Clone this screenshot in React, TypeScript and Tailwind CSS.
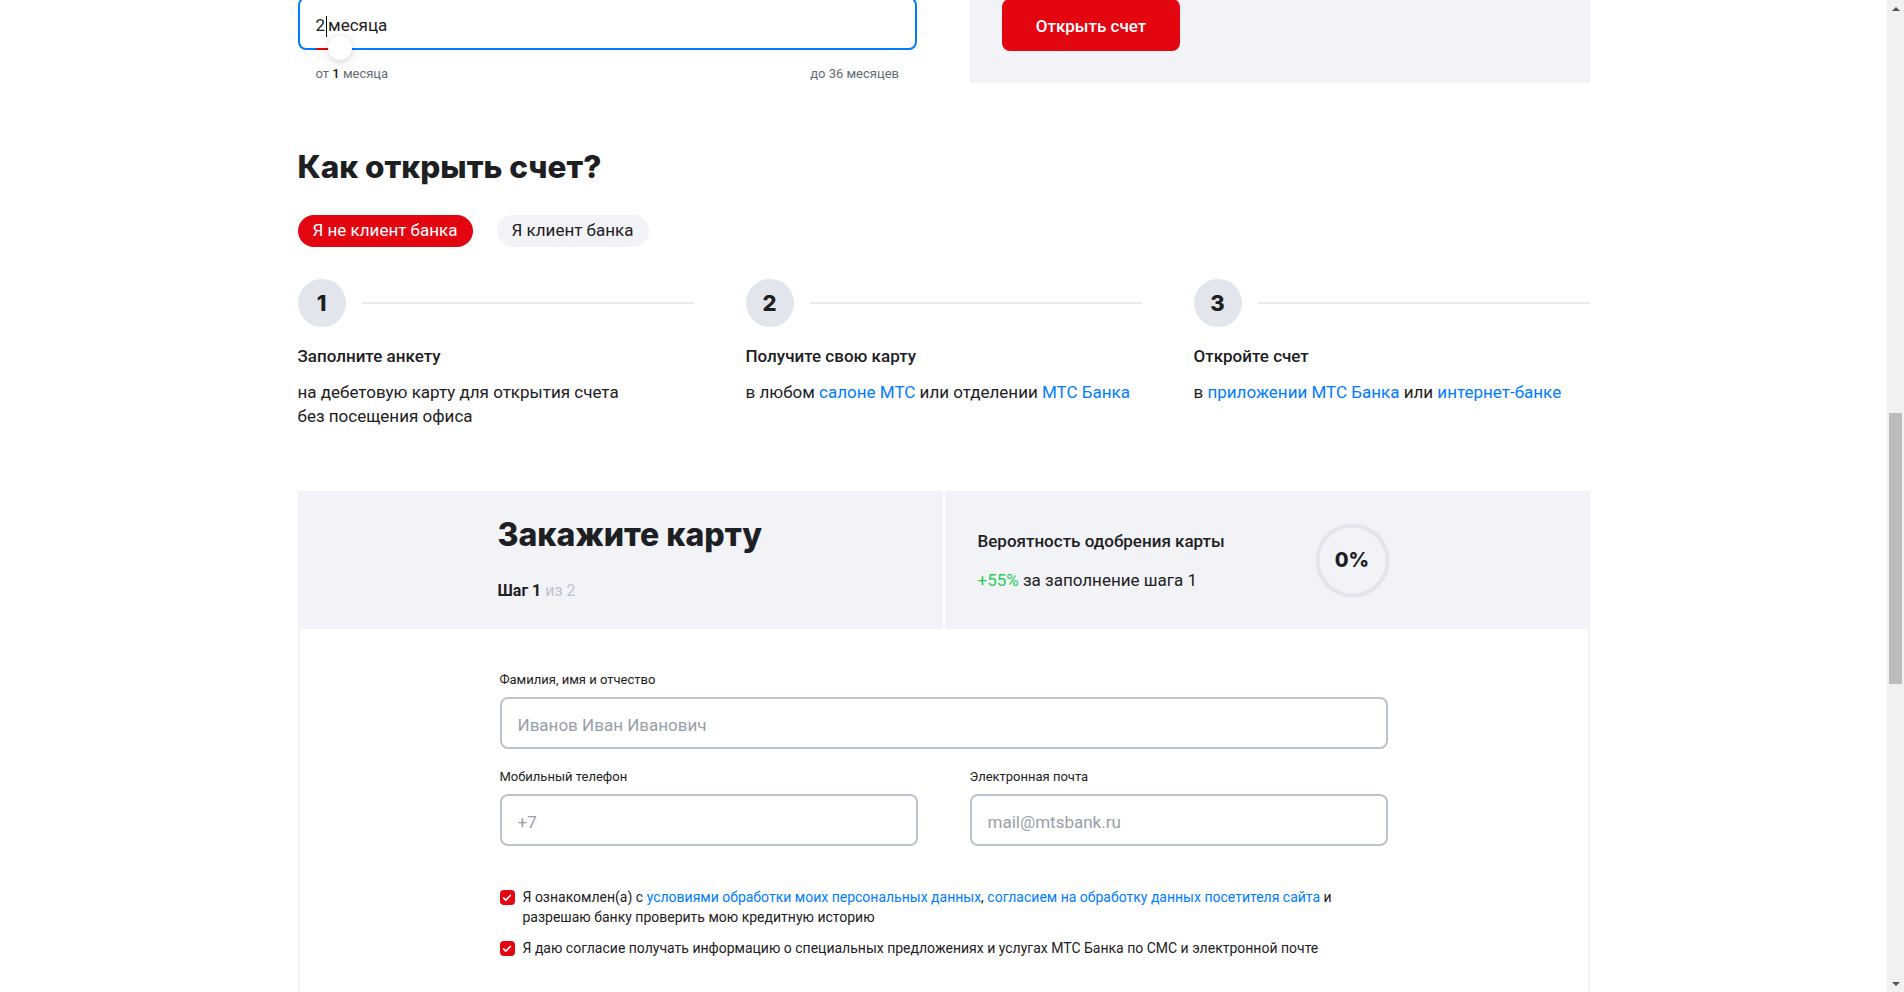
import { Check } from "lucide-react";

const body = "font-['Roboto','Liberation_Sans',sans-serif]";
const wide = "font-['Inter','Liberation_Sans',sans-serif]";

interface StepProps {
  num: number;
  title: string;
  children: React.ReactNode;
}

function Step({ num, title, children }: StepProps) {
  return (
    <div className="flex flex-col">
      <div className="flex items-center gap-4">
        <div
          className={`flex h-12 w-12 shrink-0 items-center justify-center rounded-full bg-[#e2e5eb] text-[22px] font-extrabold text-[#1d2023] ${wide}`}
        >
          {num}
        </div>
        <div className="h-[2px] flex-1 bg-[#e7eaef]" />
      </div>
      <div className="mt-[17px] text-[17px] font-medium leading-6 text-[#1d2023]">
        {title}
      </div>
      <div className="mt-3 text-[17px] leading-6 text-[#1d2023]">{children}</div>
    </div>
  );
}

function Link({ children }: { children: React.ReactNode }) {
  return <span className="text-[#007cff]">{children}</span>;
}

function Checkbox() {
  return (
    <div className="mt-[3px] flex h-[15px] w-[15px] shrink-0 items-center justify-center rounded-[4px] bg-[#e30611]">
      <Check className="size-[10px] text-white" strokeWidth={4} />
    </div>
  );
}

function Field({
  label,
  placeholder,
}: {
  label: string;
  placeholder: string;
}) {
  return (
    <div className="flex flex-col">
      <div className="text-[13px] leading-4 text-[#1d2023]">{label}</div>
      <div className="mt-[9px] flex h-[52px] items-center rounded-lg border-2 border-[#bcc3d0] px-[16px] pt-[5px] text-[17px] text-[#969fa8]">
        {placeholder}
      </div>
    </div>
  );
}

function Scrollbar() {
  return (
    <div className="flex h-[992px] w-[17px] shrink-0 flex-col items-center bg-[#f1f1f1]">
      <div className="flex h-[17px] items-center justify-center">
        <div className="h-0 w-0 border-x-[4px] border-b-[4px] border-x-transparent border-b-[#505050]" />
      </div>
      <div className="h-[396px]" />
      <div className="h-[271px] w-[13px] bg-[#bcbcbc]" />
      <div className="flex-1" />
      <div className="flex h-[17px] items-center justify-center">
        <div className="h-0 w-0 border-x-[4px] border-t-[4px] border-x-transparent border-t-[#505050]" />
      </div>
    </div>
  );
}

export default function App() {
  return (
    <div className={`flex h-[992px] overflow-hidden bg-white ${body}`}>
      <div className="flex-1 overflow-hidden">
        <div className="mx-auto w-[1292px]">
          {/* deposit term + open account */}
          <div className="-mt-[3px] grid grid-cols-2 gap-[53px]">
            <div className="flex flex-col">
              <div className="relative flex h-[53px] items-center rounded-lg border-2 border-[#007cff] px-4 pt-[5px] text-[17px] text-[#1d2023]">
                2<span className="mx-px h-[21px] w-px bg-black" />
                месяца
                <div className="absolute -bottom-[2px] left-4 h-[2px] w-[24px] bg-[#e30611]" />
                <div className="absolute -bottom-[12px] left-[28px] h-6 w-6 rounded-full bg-white shadow-[0_2px_8px_rgba(0,0,0,0.18)]" />
              </div>
              <div className="mt-[16px] flex justify-between px-[18px] text-[13px] leading-4 text-[#626c77]">
                <span>
                  от <span className="font-medium text-[#1d2023]">1</span> месяца
                </span>
                <span>до 36 месяцев</span>
              </div>
            </div>
            <div className="bg-[#f2f3f7] pb-[32px] pl-8">
              <button
                type="button"
                className="mt-[2px] h-[52px] w-[178px] rounded-lg bg-[#e30611] pt-[3px] text-[17px] font-medium text-white"
              >
                Открыть счет
              </button>
            </div>
          </div>

          {/* how to open */}
          <h2
            className={`mt-[66px] text-[31.5px] font-extrabold leading-9 text-[#1d2023] ${wide}`}
          >
            Как открыть счет?
          </h2>
          <div className="mt-[30px] flex gap-6">
            <button
              type="button"
              className="h-8 rounded-full bg-[#e30611] px-[15px] text-[17px] text-white"
            >
              Я не клиент банка
            </button>
            <button
              type="button"
              className="h-8 rounded-full bg-[#f2f3f7] px-[15px] text-[17px] text-[#1d2023]"
            >
              Я клиент банка
            </button>
          </div>

          <div className="mt-8 grid grid-cols-3 gap-[52px]">
            <Step num={1} title="Заполните анкету">
              на дебетовую карту для открытия счета
              <br />
              без посещения офиса
            </Step>
            <Step num={2} title="Получите свою карту">
              в любом <Link>салоне МТС</Link> или отделении <Link>МТС Банка</Link>
            </Step>
            <Step num={3} title="Откройте счет">
              в <Link>приложении МТС Банка</Link> или <Link>интернет-банке</Link>
            </Step>
          </div>

          {/* order card */}
          <div className="mt-[63px]">
            <div className="grid h-[138px] grid-cols-2 gap-[2px] bg-white">
              <div className="flex flex-col bg-[#f2f3f7] pl-[200px] pt-[26px]">
                <div
                  className={`text-[32px] font-extrabold leading-9 text-[#1d2023] ${wide}`}
                >
                  Закажите карту
                </div>
                <div className="mt-7 text-[16px] leading-5">
                  <span className="font-bold text-[#1d2023]">Шаг 1</span>
                  <span className="text-[#bcc3d0]"> из 2</span>
                </div>
              </div>
              <div className="flex items-center bg-[#f2f3f7] pl-[33px]">
                <div className="flex w-[337px] flex-col">
                  <div className="text-[17px] font-medium leading-6 text-[#1d2023]">
                    Вероятность одобрения карты
                  </div>
                  <div className="mt-[15px] text-[17px] leading-6 text-[#1d2023]">
                    <span className="text-[#26cd58]">+55%</span> за заполнение шага 1
                  </div>
                </div>
                <div className="relative flex h-[75px] w-[75px] items-center justify-center">
                  <svg width="75" height="75" viewBox="0 0 75 75" className="absolute inset-0">
                    <circle cx="37.5" cy="37.5" r="35" fill="none" stroke="#e2e5eb" strokeWidth="4" />
                  </svg>
                  <span className={`relative text-[20px] font-extrabold text-[#1d2023] ${wide}`}>
                    0%
                  </span>
                </div>
              </div>
            </div>

            <div className="border-x-2 border-[#f2f3f7] pb-40 pt-[43px]">
              <div className="mx-auto w-[888px]">
                <Field label="Фамилия, имя и отчество" placeholder="Иванов Иван Иванович" />
                <div className="mt-5 grid grid-cols-2 gap-[52px]">
                  <Field label="Мобильный телефон" placeholder="+7" />
                  <Field label="Электронная почта" placeholder="mail@mtsbank.ru" />
                </div>

                <div className="mt-[41px] flex gap-2 text-[14px] leading-5 text-[#1d2023]">
                  <Checkbox />
                  <div className="w-[830px]">
                    Я ознакомлен(а) с{" "}
                    <Link>условиями обработки моих персональных данных</Link>,{" "}
                    <Link>согласием на обработку данных посетителя сайта</Link> и
                    разрешаю банку проверить мою кредитную историю
                  </div>
                </div>
                <div className="mt-[11px] flex gap-2 text-[14px] leading-5 text-[#1d2023]">
                  <Checkbox />
                  <div>
                    Я даю согласие получать информацию о специальных предложениях и
                    услугах МТС Банка по СМС и электронной почте
                  </div>
                </div>
              </div>
            </div>
          </div>
        </div>
      </div>
      <Scrollbar />
    </div>
  );
}
